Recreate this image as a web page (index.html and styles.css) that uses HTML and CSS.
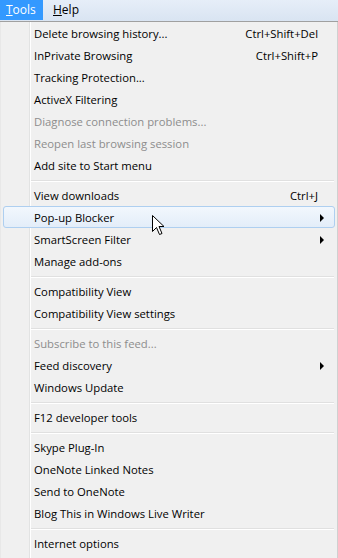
FILE: index.html
```html
<!DOCTYPE html>
<html>
<head>
<meta charset="utf-8">
<link rel="stylesheet" href="styles.css">
</head>
<body>
<div class="menubar">
  <span class="top active"><u>T</u>ools</span>
  <span class="top"><u>H</u>elp</span>
</div>
<div class="menu">
  <div class="item"><span>Delete browsing history...</span><span class="key">Ctrl+Shift+Del</span></div>
  <div class="item"><span>InPrivate Browsing</span><span class="key">Ctrl+Shift+P</span></div>
  <div class="item"><span>Tracking Protection...</span></div>
  <div class="item"><span>ActiveX Filtering</span></div>
  <div class="item disabled"><span>Diagnose connection problems...</span></div>
  <div class="item disabled"><span>Reopen last browsing session</span></div>
  <div class="item"><span>Add site to Start menu</span></div>
  <div class="sep"></div>
  <div class="item"><span>View downloads</span><span class="key">Ctrl+J</span></div>
  <div class="item hover"><span>Pop-up Blocker</span><span class="arrow"></span>
    <svg class="cursor" width="13" height="21" viewBox="0 0 13 21"><path d="M0.5 0.5 L0.5 16.5 L4.5 12.5 L7.5 19.5 L10 18.5 L7 11.5 L12 11.5 Z" fill="#fff" stroke="#000" stroke-width="1"/></svg>
  </div>
  <div class="item"><span>SmartScreen Filter</span><span class="arrow"></span></div>
  <div class="item"><span>Manage add-ons</span></div>
  <div class="sep"></div>
  <div class="item"><span>Compatibility View</span></div>
  <div class="item"><span>Compatibility View settings</span></div>
  <div class="sep"></div>
  <div class="item disabled"><span>Subscribe to this feed...</span></div>
  <div class="item"><span>Feed discovery</span><span class="arrow"></span></div>
  <div class="item"><span>Windows Update</span></div>
  <div class="sep"></div>
  <div class="item"><span>F12 developer tools</span></div>
  <div class="sep"></div>
  <div class="item"><span>Skype Plug-In</span></div>
  <div class="item"><span>OneNote Linked Notes</span></div>
  <div class="item"><span>Send to OneNote</span></div>
  <div class="item"><span>Blog This in Windows Live Writer</span></div>
  <div class="sep"></div>
  <div class="item"><span>Internet options</span></div>
</div>
</body>
</html>
```
FILE: styles.css
```css
* { box-sizing: border-box; }
html, body { margin: 0; padding: 0; }
body {
  width: 338px;
  height: 558px;
  overflow: hidden;
  background: #f0f0f0;
  font-family: "Open Sans", "Noto Sans", sans-serif;
  font-size: 11.3px;
  color: #000;
}
.menubar {
  height: 22px;
  display: flex;
  align-items: stretch;
  background: linear-gradient(#e6eef8, #d9e4f2);
  border-bottom: 1px solid #a0a0a0;
  padding-bottom: 1px;
}
.top {
  display: flex;
  align-items: center;
  padding: 0 8px 0 7px;
  line-height: 20px;
  font-size: 12px;
}
.top.active {
  background: #3399ff;
  color: #fff;
  width: 43px;
  justify-content: flex-start;
  padding-left: 6px;
}
.top + .top { padding-left: 10px; }
.menu {
  position: relative;
  height: 536px;
  background: #f0f0f0;
  border-right: 1px solid #d0d0d0;
  border-left: 1px solid #e8e8e8;
  padding-right: 2px;
}
.menu::before {
  content: "";
  position: absolute;
  left: 28px;
  top: 0;
  bottom: 0;
  width: 1px;
  background: #e2e3e3;
  box-shadow: 1px 0 0 #fff;
}
.item {
  position: relative;
  height: 22px;
  display: flex;
  align-items: center;
  padding-left: 30px;
  padding-right: 16px;
  padding-top: 1px;
  margin-left: 2px;
  border: 1px solid transparent;
  border-radius: 3px;
}
.item > span:first-child { flex: 1; }
.key { text-align: right; }
.disabled { color: #8d8d8d; }
.hover {
  background: linear-gradient(#f2f7fd, #e3edf9);
  border-color: #aecff0;
}
.arrow {
  width: 0; height: 0;
  border-top: 4px solid transparent;
  border-bottom: 4px solid transparent;
  border-left: 4px solid #000;
  margin-right: -6px;
}
.sep {
  height: 8px;
  margin-left: 30px;
  margin-right: 1px;
  display: flex;
  flex-direction: column;
  justify-content: center;
}
.sep::before {
  content: "";
  display: block;
  height: 1px;
  background: #e0e0e0;
  box-shadow: 0 1px 0 #fff;
}
.cursor {
  position: absolute;
  left: 148px;
  top: 8px;
}
```
